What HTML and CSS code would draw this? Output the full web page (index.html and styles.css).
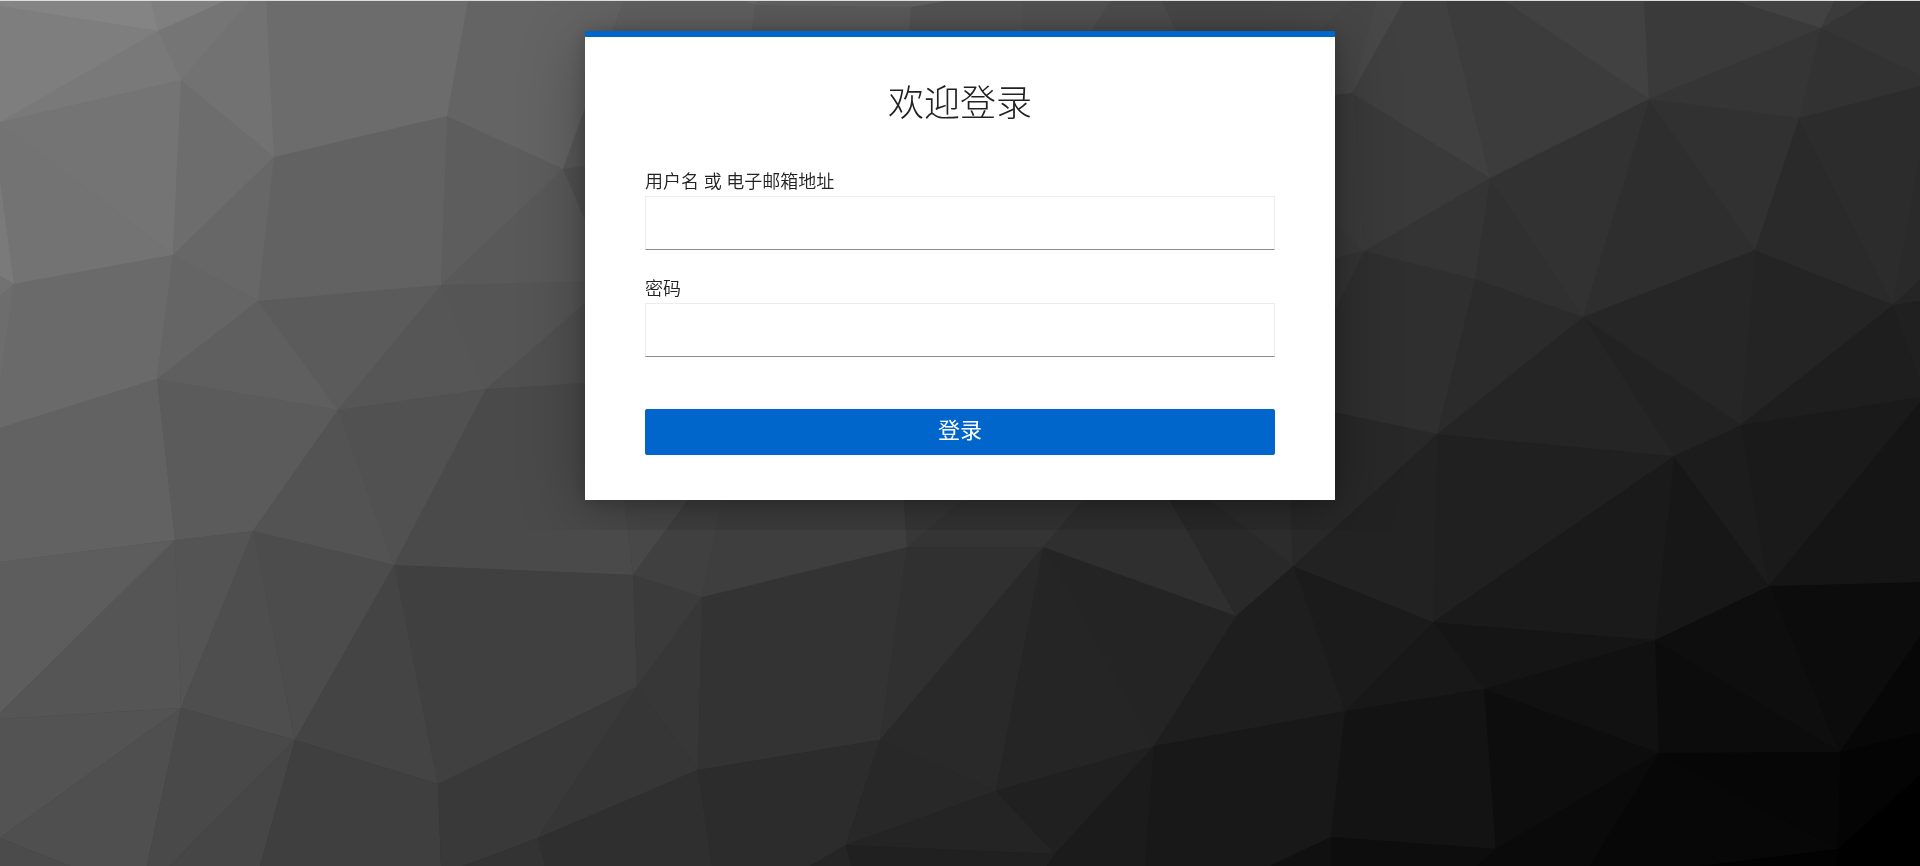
FILE: index.html
```
<!DOCTYPE html>
<html lang="zh-CN">
<head>
    <meta charset="UTF-8">
    <meta name="viewport" content="width=device-width, initial-scale=1.0">
    <title>欢迎登录</title>
    <link rel="stylesheet" href="styles.css">
</head>
<body>
    <svg class="background" viewBox="0 0 1920 866" preserveAspectRatio="xMidYMid slice" aria-hidden="true">
        <defs>
            <linearGradient id="base" x1="0" y1="0" x2="1" y2="1">
                <stop offset="0" stop-color="#848484"/>
                <stop offset="0.5" stop-color="#3c3c3c"/>
                <stop offset="1" stop-color="#000"/>
            </linearGradient>
        </defs>
        <rect width="1920" height="866" fill="url(#base)"/>

        <!-- top left -->
        <polygon points="0,0 151,0 158,31 0,6" fill="#848484"/>
        <polygon points="151,0 227,0 158,31" fill="#7f7f7f"/>
        <polygon points="0,6 158,31 0,122" fill="#7e7e7e"/>
        <polygon points="158,31 181,80 0,122" fill="#797979"/>
        <polygon points="158,31 227,0 250,0 181,80" fill="#757575"/>
        <polygon points="181,80 250,0 266,0 274,157" fill="#727272"/>
        <polygon points="266,0 468,0 447,116 274,157" fill="#6c6c6c"/>
        <polygon points="468,0 623,0 563,169 447,116" fill="#646464"/>
        <polygon points="0,122 181,80 173,255" fill="#747474"/>
        <polygon points="0,122 173,255 14,284 0,180" fill="#737373"/>
        <polygon points="0,180 14,284 0,276" fill="#7a7a7a"/>
        <polygon points="0,276 14,284 0,296" fill="#727272"/>
        <polygon points="0,296 14,284 0,382" fill="#6d6d6d"/>
        <polygon points="181,80 274,157 173,255" fill="#6d6d6d"/>
        <polygon points="173,255 274,157 258,301" fill="#676767"/>
        <polygon points="14,284 173,255 157,379 0,428 0,382" fill="#6a6a6a"/>
        <polygon points="173,255 258,301 157,379" fill="#656565"/>
        <polygon points="274,157 447,116 441,285 258,301" fill="#626262"/>
        <polygon points="447,116 563,169 441,285" fill="#5d5d5d"/>
        <polygon points="258,301 338,410 157,379" fill="#5f5f5f"/>
        <polygon points="258,301 441,285 338,410" fill="#5b5b5b"/>
        <polygon points="441,285 563,169 600,255 600,281" fill="#595959"/>
        <polygon points="563,169 620,10 600,163" fill="#595959"/>
        <polygon points="563,169 600,163 600,255" fill="#515151"/>
        <polygon points="441,285 486,389 338,410" fill="#565656"/>
        <polygon points="441,285 600,281 600,290 486,389" fill="#555555"/>
        <polygon points="486,389 600,290 600,382" fill="#505050"/>

        <!-- bottom left -->
        <polygon points="157,379 175,540 0,562 0,428" fill="#626262"/>
        <polygon points="157,379 338,410 253,531 175,540" fill="#5b5b5b"/>
        <polygon points="338,410 394,565 253,531" fill="#535353"/>
        <polygon points="338,410 486,389 394,565" fill="#515151"/>
        <polygon points="486,389 600,382 625,500 633,575 394,565" fill="#4a4a4a"/>
        <polygon points="0,562 175,540 0,713" fill="#5d5d5d"/>
        <polygon points="0,713 175,540 181,708 0,719" fill="#555555"/>
        <polygon points="175,540 253,531 181,708" fill="#545454"/>
        <polygon points="253,531 295,740 181,708" fill="#4e4e4e"/>
        <polygon points="253,531 394,565 295,740" fill="#4c4c4c"/>
        <polygon points="0,719 181,708 0,838" fill="#535353"/>
        <polygon points="0,838 181,708 147,866 70,866" fill="#4f4f4f"/>
        <polygon points="0,838 70,866 0,866" fill="#4b4b4b"/>
        <polygon points="181,708 295,740 170,866 147,866" fill="#494949"/>
        <polygon points="295,740 260,866 170,866" fill="#464646"/>
        <polygon points="295,740 438,784 441,866 260,866" fill="#3f3f3f"/>
        <polygon points="295,740 394,565 438,784" fill="#444444"/>
        <polygon points="394,565 633,575 637,687 438,784" fill="#404040"/>
        <polygon points="438,784 637,687 538,838 463,866 441,866" fill="#393939"/>
        <polygon points="463,866 538,838 545,866" fill="#333333"/>

        <!-- bottom middle -->
        <polygon points="538,838 637,687 698,770" fill="#363636"/>
        <polygon points="538,838 698,770 712,866 545,866" fill="#2f2f2f"/>
        <polygon points="633,575 702,597 637,687" fill="#3b3b3b"/>
        <polygon points="637,687 702,597 698,770" fill="#373737"/>
        <polygon points="702,597 907,547 880,740 698,770" fill="#333333"/>
        <polygon points="698,770 880,740 846,845 810,866 712,866" fill="#2c2c2c"/>
        <polygon points="810,866 846,845 851,866" fill="#252525"/>
        <polygon points="880,740 996,791 846,845" fill="#282828"/>
        <polygon points="846,845 996,791 1055,854" fill="#242424"/>
        <polygon points="846,845 1055,854 1047,866 851,866" fill="#202020"/>
        <polygon points="907,547 1043,547 880,740" fill="#303030"/>
        <polygon points="880,740 1043,547 996,791" fill="#292929"/>
        <polygon points="1043,547 1154,746 996,791" fill="#252525"/>
        <polygon points="996,791 1154,746 1055,854" fill="#202020"/>
        <polygon points="1043,547 1236,616 1154,746" fill="#242424"/>
        <polygon points="1154,746 1236,616 1345,711" fill="#1e1e1e"/>
        <polygon points="1055,854 1154,746 1145,866 1047,866" fill="#1b1b1b"/>
        <polygon points="1154,746 1345,711 1331,837 1270,866 1145,866" fill="#181818"/>
        <polygon points="1236,616 1293,566 1345,711" fill="#1e1e1e"/>
        <polygon points="620,450 688,500 633,575" fill="#484848"/>
        <polygon points="688,500 735,440 702,597 633,575" fill="#404040"/>
        <polygon points="735,440 900,440 907,547 702,597" fill="#3e3e3e"/>
        <polygon points="900,440 1035,440 907,547" fill="#373737"/>
        <polygon points="907,547 1035,440 1135,440 1043,547" fill="#343434"/>
        <polygon points="1043,547 1135,440 1236,616" fill="#2f2f2f"/>
        <polygon points="1135,440 1293,566 1236,616" fill="#292929"/>
        <polygon points="1135,440 1288,440 1293,566" fill="#2c2c2c"/>

        <!-- bottom right -->
        <polygon points="1293,566 1433,622 1345,711" fill="#1b1b1b"/>
        <polygon points="1345,711 1433,622 1484,689" fill="#181818"/>
        <polygon points="1345,711 1484,689 1496,849 1331,837" fill="#131313"/>
        <polygon points="1270,866 1331,837 1331,866" fill="#101010"/>
        <polygon points="1331,837 1496,849 1477,866 1331,866" fill="#0d0d0d"/>
        <polygon points="1433,622 1655,640 1484,689" fill="#151515"/>
        <polygon points="1484,689 1655,640 1659,753" fill="#111111"/>
        <polygon points="1484,689 1659,753 1496,849" fill="#0d0d0d"/>
        <polygon points="1496,849 1659,753 1590,866 1477,866" fill="#0a0a0a"/>
        <polygon points="1655,640 1840,752 1659,753" fill="#0c0c0c"/>
        <polygon points="1655,640 1769,586 1840,752" fill="#0e0e0e"/>
        <polygon points="1769,586 1920,582 1920,636 1840,752" fill="#0c0c0c"/>
        <polygon points="1840,752 1920,636 1920,732" fill="#070707"/>
        <polygon points="1840,752 1920,732 1920,775 1838,849" fill="#040404"/>
        <polygon points="1838,849 1920,775 1920,866 1836,866" fill="#000000"/>
        <polygon points="1659,753 1840,752 1838,849" fill="#060606"/>
        <polygon points="1659,753 1838,849 1700,866 1590,866" fill="#070707"/>
        <polygon points="1700,866 1838,849 1836,866" fill="#020202"/>
        <polygon points="1437,434 1674,456 1433,622" fill="#202020"/>
        <polygon points="1293,566 1437,434 1433,622" fill="#222222"/>
        <polygon points="1433,622 1674,456 1655,640" fill="#1a1a1a"/>
        <polygon points="1674,456 1769,586 1655,640" fill="#171717"/>
        <polygon points="1674,456 1741,425 1769,586" fill="#1c1c1c"/>
        <polygon points="1741,425 1920,397 1920,402 1769,586" fill="#1a1a1a"/>
        <polygon points="1769,586 1920,402 1920,582" fill="#151515"/>

        <!-- top right -->
        <polygon points="1351,0 1377,0 1352,93 1310,97 1310,40" fill="#464646"/>
        <polygon points="1377,0 1404,0 1352,93" fill="#484848"/>
        <polygon points="1404,0 1445,0 1490,178 1352,93" fill="#404040"/>
        <polygon points="1445,0 1504,0 1649,99 1490,178" fill="#3c3c3c"/>
        <polygon points="1504,0 1644,0 1649,99" fill="#414141"/>
        <polygon points="1644,0 1733,0 1821,28 1649,99" fill="#3a3a3a"/>
        <polygon points="1733,0 1835,0 1821,28" fill="#424242"/>
        <polygon points="1835,0 1870,0 1821,28" fill="#3b3b3b"/>
        <polygon points="1870,0 1920,0 1920,75 1821,28" fill="#353535"/>
        <polygon points="1649,99 1821,28 1799,118" fill="#353535"/>
        <polygon points="1821,28 1920,75 1920,86 1799,118" fill="#323232"/>
        <polygon points="1352,93 1490,178 1364,251" fill="#3a3a3a"/>
        <polygon points="1310,97 1352,93 1364,251 1310,200" fill="#3b3b3b"/>
        <polygon points="1310,200 1364,251 1310,264" fill="#393939"/>
        <polygon points="1364,251 1490,178 1475,279" fill="#343434"/>
        <polygon points="1490,178 1583,317 1475,279" fill="#303030"/>
        <polygon points="1490,178 1649,99 1583,317" fill="#323232"/>
        <polygon points="1649,99 1755,250 1583,317" fill="#2e2e2e"/>
        <polygon points="1649,99 1799,118 1755,250" fill="#313131"/>
        <polygon points="1799,118 1893,305 1755,250" fill="#2a2a2a"/>
        <polygon points="1799,118 1920,86 1920,155 1893,305" fill="#2c2c2c"/>
        <polygon points="1893,305 1920,155 1920,280" fill="#2a2a2a"/>
        <polygon points="1893,305 1920,280 1920,301" fill="#252525"/>
        <polygon points="1893,305 1920,301 1920,382" fill="#202020"/>
        <polygon points="1583,317 1755,250 1741,425" fill="#262626"/>
        <polygon points="1755,250 1893,305 1741,425" fill="#242424"/>
        <polygon points="1741,425 1893,305 1920,382 1920,397" fill="#1e1e1e"/>
        <polygon points="1583,317 1741,425 1674,456" fill="#222222"/>
        <polygon points="1583,317 1674,456 1437,434" fill="#252525"/>
        <polygon points="1475,279 1583,317 1437,434" fill="#2b2b2b"/>
        <polygon points="1364,251 1475,279 1437,434 1310,407 1310,361" fill="#2f2f2f"/>
        <polygon points="1310,264 1364,251 1310,361" fill="#343434"/>
        <polygon points="1310,407 1437,434 1293,566 1288,440" fill="#282828"/>

        <!-- top middle -->
        <polygon points="623,0 742,0 755,5 750,40 610,40" fill="#606060"/>
        <polygon points="742,0 759,0 755,5" fill="#686868"/>
        <polygon points="759,0 953,0 911,7 755,5" fill="#626262"/>
        <polygon points="755,5 911,7 908,40 750,40" fill="#5b5b5b"/>
        <polygon points="911,7 953,0 1022,0 1022,40 908,40" fill="#545454"/>
        <polygon points="1022,0 1111,0 1085,40 1022,40" fill="#525252"/>
        <polygon points="1111,0 1161,0 1180,40 1085,40" fill="#4d4d4d"/>
        <polygon points="1161,0 1351,0 1310,40 1180,40" fill="#484848"/>
    </svg>

    <main class="login">
        <div class="card">
            <h1>欢迎登录</h1>

            <form action="#" method="post">
                <div class="form-group">
                    <label for="username">用户名 或 电子邮箱地址</label>
                    <input type="text" id="username" name="username" autocomplete="off">
                </div>
                <div class="form-group">
                    <label for="password">密码</label>
                    <input type="password" id="password" name="password" autocomplete="off">
                </div>
                <button type="submit">登录</button>
            </form>
        </div>
    </main>
</body>
</html>
```
FILE: styles.css
```
* {
    box-sizing: border-box;
}

body {
    margin: 0;
    border-top: 1px solid #d9dddf;
    background-color: #222;
    color: #222;
    font-family: "Open Sans", "Noto Sans CJK SC", sans-serif;
    font-size: 18px;
    font-weight: 350;
    line-height: 25px;
}

.background {
    position: fixed;
    top: 0;
    left: 0;
    z-index: -1;
    width: 100%;
    height: 100%;
}

.login {
    padding: 30px 20px;
}

.card {
    max-width: 750px;
    margin: 0 auto;
    padding: 39px 60px 45px;
    border-top: 6px solid #06c;
    background: #fff;
    box-shadow: 0 10px 60px rgba(0, 0, 0, 0.3), 0 2px 16px rgba(0, 0, 0, 0.2);
}

h1 {
    margin: 0 0 39px;
    font-size: 36px;
    font-weight: 300;
    line-height: 54px;
    text-align: center;
}

.form-group {
    margin-bottom: 26px;
}

label {
    display: block;
    margin-bottom: 2px;
}

input {
    display: block;
    width: 100%;
    height: 54px;
    padding: 8px 12px;
    border: 1px solid #ededed;
    border-bottom-color: #8a8d90;
    border-radius: 0;
    background: #fff;
    color: inherit;
    font: inherit;
}

input:focus {
    outline: none;
    border-bottom-color: #06c;
}

button {
    display: block;
    width: 100%;
    height: 46px;
    margin-top: 52px;
    padding: 0 0 6px;
    border: none;
    border-radius: 2px;
    background-color: #06c;
    color: #fff;
    font: inherit;
    font-size: 22px;
    font-weight: 400;
    cursor: pointer;
}

button:hover {
    background-color: #004080;
}
```
